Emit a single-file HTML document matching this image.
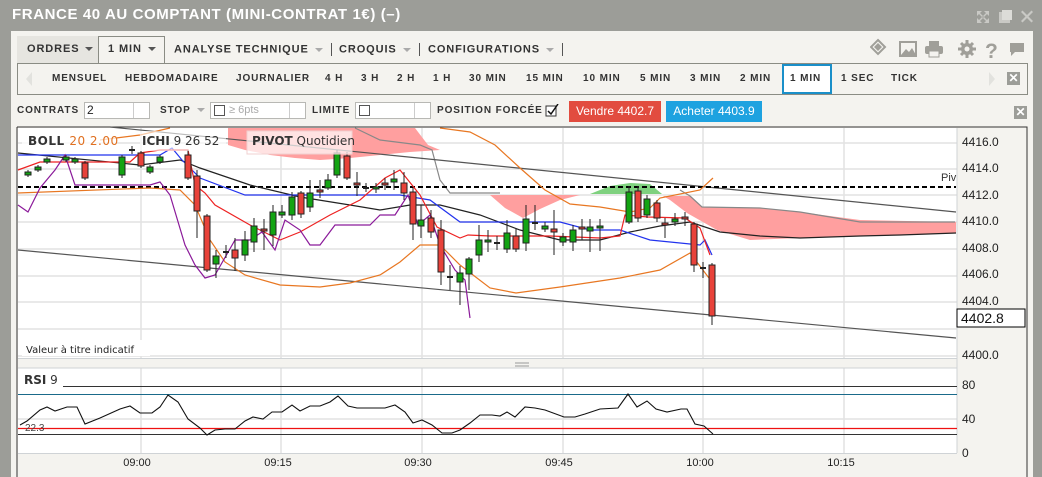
<!DOCTYPE html>
<html><head><meta charset="utf-8">
<style>
*{margin:0;padding:0;box-sizing:border-box}
body{width:1042px;height:477px;overflow:hidden;background:#9c9d98;font-family:"Liberation Sans",sans-serif;position:relative}
.title{position:absolute;left:12px;top:6px;color:#fff;font-weight:bold;font-size:15px;letter-spacing:0.6px}
.panel{position:absolute;left:11px;top:31px;width:1022px;height:446px;background:#f4f3ef}
.abs{position:absolute}
.tb{font-size:11px;font-weight:bold;color:#333;letter-spacing:0.9px;white-space:nowrap}
.tb2{font-size:10px;font-weight:bold;color:#333;letter-spacing:0.9px;white-space:nowrap}
.tri{display:inline-block;width:0;height:0;border-left:4px solid transparent;border-right:4px solid transparent;border-top:4px solid #555;vertical-align:middle;margin-left:6px}
.tri.g{border-top-color:#aaa}
.sep{display:inline-block;width:1px;height:13px;background:#555;vertical-align:middle;margin-left:8px}
.inp{position:absolute;height:17px;border:1px solid #b8b8b4;background:#fff;font-size:12px;color:#222}
.spin{position:absolute;right:0;top:0;width:16px;height:15px;border-left:1px solid #ccc}
.xbtn{position:absolute;width:13px;height:13px;background:#9c9d98;color:#fff;font-size:12px;font-weight:bold;line-height:13px;text-align:center}
.tf span{position:absolute;top:73px}
</style></head><body>
<div class="title">FRANCE 40 AU COMPTANT (MINI-CONTRAT 1€) (–)</div>
<svg class="abs" style="left:975px;top:9px" width="62" height="16">
<g fill="#c9c9c5"><path d="M2 2h5l-2 2 3 3-1 1-3-3-2 2z"/><path d="M14 2h-5l2 2-3 3 1 1 3-3 2 2z"/><path d="M2 14h5l-2-2 3-3-1-1-3 3-2-2z"/><path d="M14 14h-5l2-2-3-3 1-1 3 3 2-2z"/>
<rect x="24" y="3" width="11" height="11"/><rect x="27" y="1" width="10" height="10" fill="#dcdcd8"/>
<path d="M46 3l1.5-1.5 4.5 4.5 4.5-4.5 1.5 1.5-4.5 4.5 4.5 4.5-1.5 1.5-4.5-4.5-4.5 4.5-1.5-1.5 4.5-4.5z"/></g></svg>
<div class="panel"></div>
<div class="abs" style="left:17px;top:36px;width:82px;height:27px;background:#e6e5e0"></div>
<div class="abs" style="left:98px;top:36px;width:67px;height:28px;border:1px solid #8a8c84;border-bottom:none;background:#f4f3ef"></div>
<div class="abs tb" style="left:27px;top:43px">ORDRES<span class="tri"></span></div>
<div class="abs tb" style="left:108px;top:43px">1 MIN<span class="tri"></span></div>
<div class="abs tb" style="left:174px;top:43px">ANALYSE TECHNIQUE<span class="tri g"></span><span class="sep"></span></div>
<div class="abs tb" style="left:339px;top:43px">CROQUIS<span class="tri g"></span><span class="sep"></span></div>
<div class="abs tb" style="left:428px;top:43px">CONFIGURATIONS<span class="tri g"></span><span class="sep"></span></div>
<svg class="abs" style="left:870px;top:38px" width="160" height="24"><g fill="#a09f99">
<path d="M8 2l7 7-7 7-7-7z" fill="none" stroke="#a09f99" stroke-width="2"/><path d="M4 9l4-4 4 4-4 4z"/>
<rect x="30" y="4" width="16" height="14" fill="none" stroke="#a09f99" stroke-width="2"/><path d="M31 17l5-6 3 3 3-4 4 7z"/>
<rect x="59" y="3" width="10" height="5"/><rect x="55" y="8" width="18" height="8" rx="2"/><rect x="59" y="13" width="10" height="6" fill="#f4f3ef" stroke="#a09f99"/>
<g stroke="#a09f99" stroke-width="3"><path d="M97 2v18M88 11h18M91 5l12 12M103 5l-12 12"/></g><circle cx="97" cy="11" r="6"/><circle cx="97" cy="11" r="2.5" fill="#f4f3ef"/>
<text x="115" y="20" font-size="21" font-weight="bold" font-family="Liberation Sans">?</text>
<path d="M140 5h14v9h-9l-4 4v-4h-1z"/></g></svg>
<div class="abs" style="left:17px;top:63px;width:1011px;height:32px;border:1px solid #8a8c84"></div>
<svg class="abs" style="left:24px;top:70px" width="10" height="18"><path d="M8 2L2 9l6 7z" fill="#e2e2de"/></svg>
<svg class="abs" style="left:987px;top:70px" width="10" height="18"><path d="M2 2l6 7-6 7z" fill="#e2e2de"/></svg>
<div class="xbtn" style="left:1007px;top:72px">✕</div>
<div class="abs" style="left:782px;top:64px;width:50px;height:30px;border:2px solid #1a8fc9;background:#fff"></div>
<div class="tb2 tf" style="position:absolute;left:0;top:0">
<span style="left:52px">MENSUEL</span><span style="left:125px">HEBDOMADAIRE</span><span style="left:236px">JOURNALIER</span><span style="left:325px">4 H</span><span style="left:361px">3 H</span><span style="left:397px">2 H</span><span style="left:433px">1 H</span><span style="left:469px">30 MIN</span><span style="left:526px">15 MIN</span><span style="left:583px">10 MIN</span><span style="left:640px">5 MIN</span><span style="left:690px">3 MIN</span><span style="left:740px">2 MIN</span><span style="left:790px">1 MIN</span><span style="left:841px">1 SEC</span><span style="left:891px">TICK</span></div>
<div class="abs tb2" style="left:17px;top:105px">CONTRATS</div>
<div class="inp" style="left:84px;top:102px;width:66px;padding-left:2px">2<div class="spin"></div></div>
<div class="abs tb2" style="left:160px;top:105px">STOP<span class="tri g"></span></div>
<div class="inp" style="left:210px;top:102px;width:96px;color:#aaa;font-size:11px;padding-left:18px;line-height:15px">≥ 6pts<div class="abs" style="left:3px;top:2px;width:11px;height:11px;border:1px solid #555"></div><div class="spin"></div></div>
<div class="abs tb2" style="left:312px;top:105px">LIMITE</div>
<div class="inp" style="left:355px;top:102px;width:76px"><div class="abs" style="left:3px;top:2px;width:11px;height:11px;border:1px solid #555"></div><div class="spin"></div></div>
<div class="abs tb2" style="left:437px;top:105px">POSITION FORCÉE</div>
<svg class="abs" style="left:545px;top:104px" width="14" height="14"><rect x="1" y="2" width="10" height="10" fill="#fff" stroke="#333"/><path d="M3 7l3 3 7-10" fill="none" stroke="#111" stroke-width="1.5"/></svg>
<div class="abs" style="left:569px;top:101px;width:92px;height:21px;background:#e24c3f;color:#fff;font-size:12px;text-align:center;line-height:21px">Vendre 4402.7</div>
<div class="abs" style="left:666px;top:101px;width:96px;height:21px;background:#1ea2e0;color:#fff;font-size:12px;text-align:center;line-height:21px">Acheter 4403.9</div>
<div class="xbtn" style="left:1014px;top:106px">✕</div>
<svg class="abs" style="left:0;top:0" width="1042" height="477" font-family="Liberation Sans">
<rect x="17" y="127" width="1010" height="350" fill="#f4f3ef"/>
<rect x="18" y="128" width="939" height="230" fill="#fff"/>
<rect x="18" y="368" width="939" height="85" fill="#fff"/>
<g stroke="#e2e2e2" stroke-width="1.5">
<path d="M18 143H957M18 169H957M18 195H957M18 222H957M18 249H957M18 276H957M18 302H957M18 329H957M18 356H957"/>
<path d="M141 128V358M281 128V358M422 128V358M563 128V358M703 128V358M844 128V358"/>
<path d="M141 368V453M281 368V453M422 368V453M563 368V453M703 368V453M844 368V453M18 419H957"/>
</g>
<path d="M17 127H1027V477M17 127V477" fill="none" stroke="#333"/>
<path d="M957 128V453M18 358.5H957M18 368H957M18 453.5H957" stroke="#cfd3d6"/>
<path d="M515 363h14M515 366h14" stroke="#999"/>
<path d="M228 128H415L428 145L440 150L410 152L380 155L350 158L320 160L295 158L270 155L245 150L228 145Z" fill="#ff9f9f"/>
<path d="M490 195H580L560 200L540 209L523 218L505 208Z" fill="#ff9f9f"/>
<path d="M590 194L610 186L630 183L650 184L662 194Z" fill="#7fd17f"/>
<path d="M663 196H690L702 207L760 208L800 212L860 220L956 222V233L900 235L860 236L800 238L750 240L717 230L687 213L670 200Z" fill="#ff9f9f"/>
<path d="M955 222H860L800 212L760 208L702 207L690 196L680 190" fill="none" stroke="#888" stroke-width="1.2"/>
<path d="M355 128L380 140L420 145L432 150L440 180L450 193L500 193" fill="none" stroke="#888" stroke-width="1.2"/>
<path d="M110 127L956 212M18 250L956 338" stroke="#555" stroke-width="1.2"/>
<path d="M18 187H956" stroke="#000" stroke-width="2" stroke-dasharray="5,3"/>
<text x="941" y="181" font-size="11" fill="#333">Piv</text>
<g fill="none" stroke-width="1.2">
<polyline stroke="#e87722" points="18,193 150,188 180,190 195,205 210,240 225,262 245,275 280,285 320,287 350,283 380,275 400,262 420,245 440,245 460,265 490,288 516,293 560,287 620,278 660,270 690,253 712,282"/>
<polyline stroke="#e87722" points="100,140 140,135 170,128"/>
<polyline stroke="#e87722" points="440,128 470,132 495,145 520,168 545,190 570,204 600,207 630,212 650,208 660,198 700,190 713,178"/>
<polyline stroke="#222" points="18,153 140,165 180,160 200,168 250,185 300,197 350,205 380,210 410,205 440,205 480,215 520,230 560,240 600,240 630,232 660,226 690,222 720,232 760,236 800,238 860,236 900,235 956,233"/>
<polyline stroke="#2233ee" points="18,155 160,155 172,148 182,160 200,178 245,195 400,195 430,200 460,222 520,222 560,222 590,230 620,230 650,240 700,245 705,240 712,255"/>
<polyline stroke="#ee2222" points="18,170 40,162 130,162 140,153 160,150 188,150 195,185 205,193 215,205 250,225 280,240 300,232 330,215 360,200 385,178 400,170 420,195 437,227 460,238 468,235 490,236 520,236 550,236 575,237 600,238 620,236 625,215 648,217 685,218 700,228 710,255"/>
<polyline stroke="#8b1a9a" points="18,205 28,212 40,188 55,170 65,155 75,185 90,185 150,185 160,182 170,195 185,245 195,265 205,278 215,275 235,240 250,240 262,232 275,250 285,220 300,230 310,245 320,245 335,225 370,225 380,215 395,215 408,195 418,225 430,215 440,245 455,270 465,280 470,318"/>
</g>
<g stroke="#222" stroke-width="1">
<path d="M28 170V177M38 165V172M47 157V164M66 155V162M75 157V164M85 161V180M122 155V178M132 146V154M141 151V168M150 165V174M160 155V164M188 150V180M197 170V238M207 214V272M216 250V278M226 245V258M235 238V271M245 231V261M254 218V252M264 219V250M273 205V246M282 205V218M292 192V220M301 191V218M310 180V212M320 180V198M328 174V190M337 150V178M347 152V180M357 172V196M366 183V192M376 183V193M385 178V190M394 170V190M404 172V200M413 188V240M421 205V238M431 210V238M441 220V285M450 265V290M460 266V305M469 257V290M479 225V262M488 230V252M497 236V250M507 220V253M516 228V252M526 205V251M535 205V230M545 222V232M554 210V255M563 233V246M573 225V251M582 219V240M590 219V252M600 219V251M629 186V224M638 186V222M647 195V218M657 200V222M665 218V238M675 213V226M685 212V226M694 222V272M703 262V278M712 263V325"/>
</g>
<g stroke="#222" stroke-width="1" fill="#13a413">
<rect x="25" y="172" width="6" height="3"/><rect x="35" y="167" width="6" height="3"/><rect x="44" y="159" width="6" height="3"/><rect x="63" y="157" width="6" height="3"/><rect x="72" y="159" width="6" height="3"/><rect x="119" y="157" width="6" height="18"/><rect x="147" y="167" width="6" height="5"/><rect x="157" y="157" width="6" height="5"/><rect x="213" y="256" width="6" height="8"/><rect x="242" y="240" width="6" height="15"/><rect x="251" y="226" width="6" height="16"/><rect x="270" y="212" width="6" height="23"/><rect x="279" y="212" width="6" height="3"/><rect x="289" y="197" width="6" height="18"/><rect x="307" y="193" width="6" height="14"/><rect x="325" y="180" width="6" height="8"/><rect x="334" y="153" width="6" height="22"/><rect x="373" y="187" width="6" height="2"/><rect x="391" y="179" width="6" height="3"/><rect x="418" y="220" width="6" height="6"/><rect x="457" y="273" width="6" height="9"/><rect x="466" y="259" width="6" height="15"/><rect x="476" y="240" width="6" height="15"/><rect x="485" y="240" width="6" height="2"/><rect x="504" y="233" width="6" height="16"/><rect x="523" y="219" width="6" height="24"/><rect x="542" y="226" width="6" height="3"/><rect x="560" y="237" width="6" height="5"/><rect x="570" y="230" width="6" height="12"/><rect x="587" y="227" width="6" height="4"/><rect x="597" y="226" width="6" height="2"/><rect x="626" y="192" width="6" height="30"/><rect x="644" y="199" width="6" height="16"/><rect x="672" y="219" width="6" height="3"/>
</g>
<g stroke="#222" stroke-width="1" fill="#e8423a">
<rect x="82" y="163" width="6" height="15"/><rect x="138" y="153" width="6" height="13"/><rect x="185" y="155" width="6" height="23"/><rect x="194" y="176" width="6" height="35"/><rect x="204" y="216" width="6" height="54"/><rect x="232" y="250" width="6" height="8"/><rect x="261" y="229" width="6" height="2"/><rect x="298" y="193" width="6" height="21"/><rect x="317" y="190" width="6" height="2"/><rect x="344" y="156" width="6" height="22"/><rect x="354" y="183" width="6" height="2"/><rect x="382" y="183" width="6" height="2"/><rect x="401" y="183" width="6" height="10"/><rect x="410" y="192" width="6" height="32"/><rect x="428" y="218" width="6" height="14"/><rect x="438" y="230" width="6" height="42"/><rect x="513" y="236" width="6" height="13"/><rect x="551" y="229" width="6" height="3"/><rect x="579" y="227" width="6" height="2"/><rect x="635" y="191" width="6" height="27"/><rect x="654" y="203" width="6" height="15"/><rect x="662" y="223" width="6" height="2"/><rect x="682" y="217" width="6" height="2"/><rect x="691" y="224" width="6" height="41"/><rect x="709" y="265" width="6" height="51"/>
</g>
<g stroke="#222" stroke-width="2"><path d="M129 150h6M223 252h6M447 277h6M494 243h6M532 223h6M363 188h6M700 268h6"/></g>
<rect x="22" y="131" width="95" height="20" fill="#fff" fill-opacity="0.75"/>
<text x="28" y="145" font-size="12" fill="#333" font-weight="bold" letter-spacing="0.5" font-family="DejaVu Sans">BOLL <tspan fill="#e07020" font-weight="normal">20  2.00</tspan></text>
<rect x="140" y="131" width="86" height="20" fill="#fff" fill-opacity="0.6"/>
<text x="142" y="145" font-size="12" fill="#333" font-family="DejaVu Sans"><tspan font-weight="bold">ICHI</tspan> 9  26  52</text>
<rect x="247" y="131" width="105" height="23" fill="#fff" fill-opacity="0.7" stroke="#f0d0d0"/>
<text x="252" y="145" font-size="12" fill="#333" font-family="DejaVu Sans"><tspan font-weight="bold">PIVOT</tspan> Quotidien</text>
<rect x="22" y="340" width="128" height="16" fill="#fff"/>
<text x="26" y="353" font-size="10" fill="#222" font-family="DejaVu Sans">Valeur à titre indicatif</text>
<g font-size="12" fill="#222"><text x="962" y="146">4416.0</text><text x="962" y="172">4414.0</text><text x="962" y="199">4412.0</text><text x="962" y="225">4410.0</text><text x="962" y="252">4408.0</text><text x="962" y="278">4406.0</text><text x="962" y="305">4404.0</text><text x="962" y="359">4400.0</text></g>
<rect x="957" y="309" width="68" height="18" fill="#fff" stroke="#000"/>
<text x="961" y="323" font-size="14" fill="#111">4402.8</text>
<path d="M63 386.5H957" stroke="#333"/><path d="M18 394.5H957" stroke="#1a6a8a"/><path d="M18 428.5H957" stroke="#ee1111" stroke-width="1.2"/><path d="M18 434.5H957" stroke="#333"/>
<polyline fill="none" stroke="#111" stroke-width="1.1" points="20,425 27,421 40,410 47,407 55,411 67,407 77,407 85,424 100,418 120,409 130,406 140,413 152,413 160,407 168,395 178,402 188,419 200,428 207,435 215,430 225,429 235,429 245,421 253,417 263,419 272,412 282,412 292,405 300,411 310,406 320,406 330,402 338,396 348,406 357,408 385,408 395,405 405,412 413,423 422,420 432,425 442,433 452,433 460,430 470,423 480,415 492,415 500,416 507,412 515,417 525,407 535,408 545,410 564,417 575,417 585,414 600,409 618,408 628,394 637,407 647,401 656,409 667,412 681,409 687,409 695,424 704,426 713,434"/>
<rect x="20" y="371" width="43" height="18" fill="#fff"/>
<text x="24" y="384" font-size="12" fill="#333" font-family="DejaVu Sans"><tspan font-weight="bold">RSI</tspan>  9</text>
<text x="25" y="431" font-size="10" fill="#444">22.3</text>
<g font-size="12" fill="#222"><text x="962" y="389">80</text><text x="962" y="423">40</text><text x="962" y="457">0</text></g>
<g font-size="11" fill="#222" text-anchor="middle"><text x="137" y="466">09:00</text><text x="278" y="466">09:15</text><text x="418" y="466">09:30</text><text x="559" y="466">09:45</text><text x="700" y="466">10:00</text><text x="841" y="466">10:15</text></g>
</svg>
</body></html>
